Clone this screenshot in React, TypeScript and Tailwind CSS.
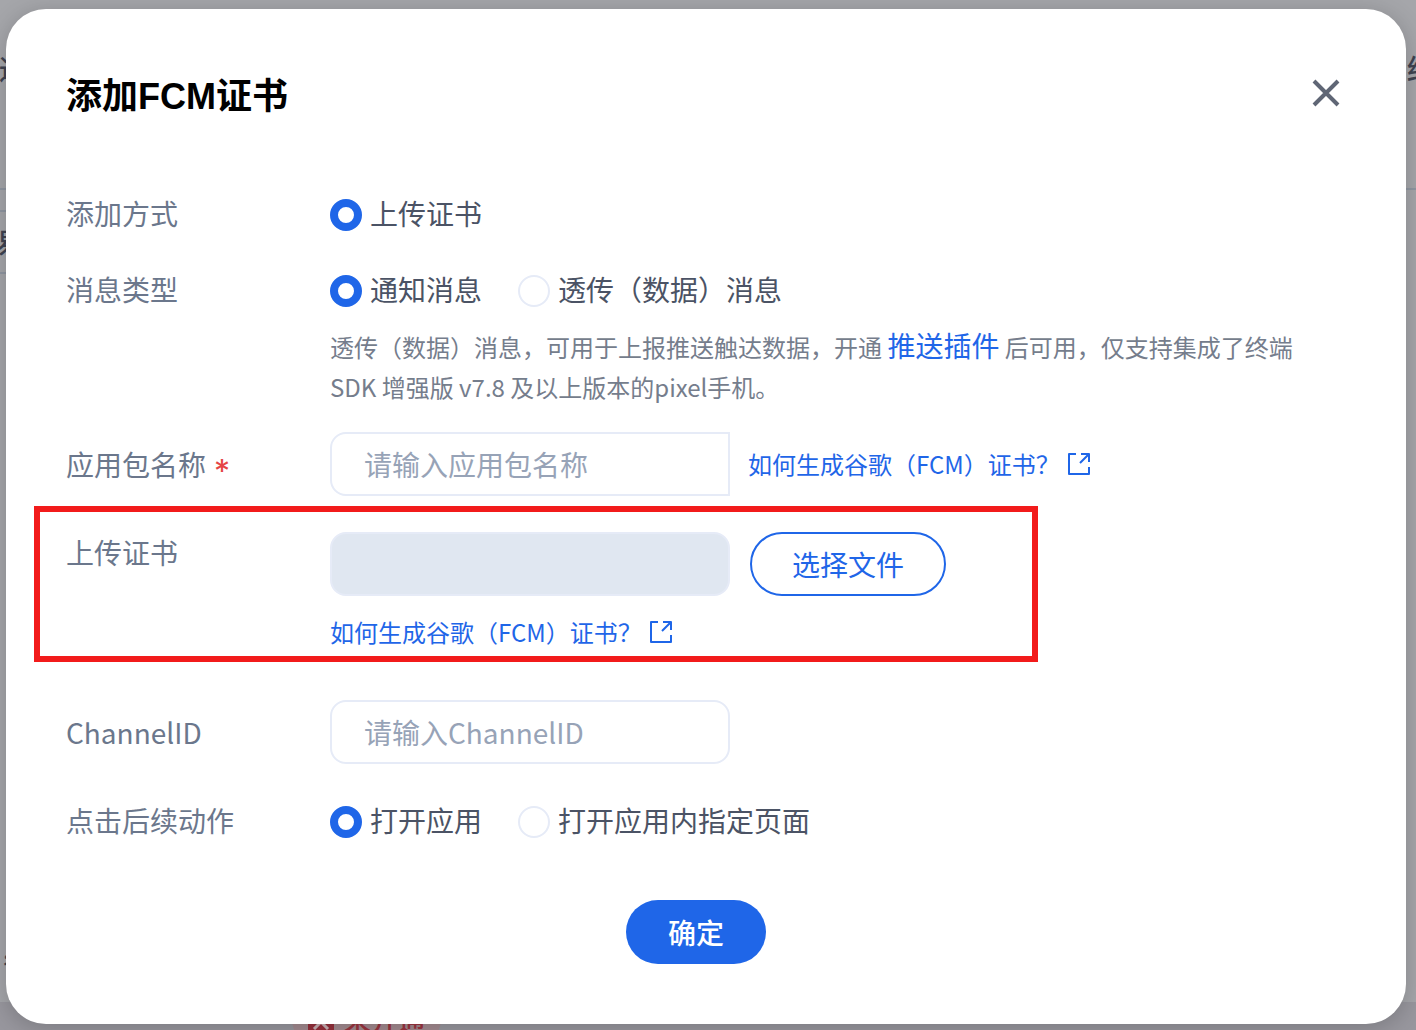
import { useState } from "react";
import type { ReactNode } from "react";

interface Option {
  value: string;
  label: string;
}

const METHODS: Option[] = [{ value: "upload", label: "上传证书" }];

const MESSAGE_TYPES: Option[] = [
  { value: "notice", label: "通知消息" },
  { value: "data", label: "透传（数据）消息" },
];

const ACTIONS: Option[] = [
  { value: "app", label: "打开应用" },
  { value: "page", label: "打开应用内指定页面" },
];

const LABEL = "w-[264px] shrink-0 text-[28px] text-[#6b778c]";
const INPUT =
  "h-16 w-[400px] border-2 border-[#e6ebf7] bg-white px-8 text-[28px] text-[#4b5365] outline-none placeholder:text-[#97a3b7]";

function RadioRow({ label, name, options }: { label: string; name: string; options: Option[] }) {
  const [value, setValue] = useState(options[0].value);

  return (
    <div className="flex items-start" role="radiogroup" aria-labelledby={name}>
      <span id={name} className={`${LABEL} leading-9`}>
        {label}
      </span>
      <div className="flex flex-wrap gap-9">
        {options.map((o) => (
          <label
            key={o.value}
            className="flex items-start gap-2 text-[28px] leading-9 text-[#4b5365]"
          >
            <input
              type="radio"
              name={name}
              checked={value === o.value}
              onChange={() => setValue(o.value)}
              className="mt-1 size-8 shrink-0 appearance-none rounded-full border-2 border-[#e6ebf7] bg-white checked:border-8 checked:border-[#1f66e8]"
            />
            {o.label}
          </label>
        ))}
      </div>
    </div>
  );
}

function HelpLink({ children }: { children: ReactNode }) {
  return (
    <a href="#help" className="flex items-center gap-2 text-2xl leading-10 text-[#1f66e8]">
      {children}
      <svg
        width="22"
        height="22"
        viewBox="0 0 22 22"
        fill="none"
        stroke="currentColor"
        strokeWidth="2"
        strokeLinejoin="round"
      >
        <path d="M8 1H1v20h20v-7M13 1h8v8M21 1L12 10" />
      </svg>
    </a>
  );
}

export default function App() {
  return (
    <div className="relative min-h-screen overflow-hidden bg-[#a5a6aa] font-['Noto_Sans_CJK_SC',sans-serif]">
      {/* dimmed page under the dialog */}
      <div
        aria-hidden="true"
        className="absolute inset-0 text-[28px] font-medium leading-10 text-[#3f4351]"
      >
        <div className="absolute inset-x-0 top-[188px] h-0.5 bg-[#9097a2]" />
        <div className="absolute left-0 top-[210px] h-0.5 w-10 bg-[#9097a2]" />
        <div className="absolute left-0 top-[272px] h-0.5 w-10 bg-[#9097a2]" />
        <div className="absolute inset-x-0 bottom-0 h-7 bg-[#98979e]" />
        <span className="absolute -left-px top-12">通</span>
        <span className="absolute -left-1 top-[222px]">易</span>
        <span className="absolute left-0 top-[930px]">，</span>
        <span className="absolute left-[1407px] top-12 whitespace-nowrap">终端</span>
        <div className="absolute left-[292px] top-[998px] flex h-11 w-[149px] items-center gap-2.5 rounded-3xl bg-[#a38b90] pl-4 text-[27px] text-[#9c3540]">
          <svg width="26" height="26" viewBox="0 0 26 26" className="shrink-0">
            <path d="M0 0h26v26H0z" fill="#96303c" />
            <path d="M6 8l14 14M20 8L6 22" stroke="#c8b0b4" strokeWidth="3" />
          </svg>
          未开通
        </div>
      </div>

      <div
        role="dialog"
        aria-labelledby="title"
        className="relative mb-1.5 ml-1.5 mr-2.5 mt-[9px] rounded-[40px] bg-white pb-[60px] pl-[60px] pr-[66px] pt-[60px] shadow-[0_4px_24px_rgba(0,0,0,0.2)]"
      >
        <header className="flex h-12 items-start justify-between">
          <h1 id="title" className="text-4xl font-bold leading-[48px] text-black">
            添加<span className="font-['Liberation_Sans',sans-serif]">FCM</span>证书
          </h1>
          <button type="button" aria-label="关闭" className="pt-[10px] text-[#5f6675]">
            <svg width="28" height="28" viewBox="0 0 28 28" stroke="currentColor" strokeWidth="4">
              <path d="M2 2l24 24M26 2L2 26" />
            </svg>
          </button>
        </header>

        <form className="mt-[78px] flex flex-col" onSubmit={(e) => e.preventDefault()}>
          <div className="flex flex-col gap-10">
            <RadioRow label="添加方式" name="method" options={METHODS} />
            <RadioRow label="消息类型" name="message" options={MESSAGE_TYPES} />
          </div>
          <p className="ml-[264px] mt-5 text-2xl leading-10 text-[#757d8c]">
            透传（数据）消息，可用于上报推送触达数据，开通{" "}
            <a href="#plugin" className="text-[28px] leading-none text-[#1f66e8]">
              推送插件
            </a>{" "}
            后可用，仅支持集成了终端 SDK 增强版 v7.8 及以上版本的pixel手机。
          </p>

          <div className="mt-[25px] flex items-center">
            <label htmlFor="package" className={`${LABEL} flex items-center gap-2 leading-10`}>
              应用包名称
              <span className="h-10 pt-2 font-[Inter] text-[32px] leading-10 text-[#e54545]">*</span>
            </label>
            <input
              id="package"
              placeholder="请输入应用包名称"
              className={`${INPUT} mr-[18px] rounded-l-2xl`}
            />
            <HelpLink>如何生成谷歌（FCM）证书？</HelpLink>
          </div>

          <div className="relative mt-9 flex items-start">
            <label htmlFor="certificate" className={`${LABEL} leading-10`}>
              上传证书
            </label>
            <div>
              <div className="flex gap-5">
                <input
                  id="certificate"
                  disabled
                  className={`${INPUT} rounded-2xl disabled:bg-[#e0e7f1]`}
                />
                <button
                  type="button"
                  className="h-16 rounded-full border-2 border-[#1f66e8] px-10 text-[28px] text-[#1f66e8]"
                >
                  选择文件
                </button>
              </div>
              <div className="mt-4 flex">
                <HelpLink>如何生成谷歌（FCM）证书？</HelpLink>
              </div>
            </div>
            {/* highlight frame */}
            <div className="pointer-events-none absolute -left-8 -top-[26px] h-[156px] w-[1004px] border-6 border-[#f21b1b]" />
          </div>

          <div className="mb-[38px] mt-12 flex items-center">
            <label htmlFor="channel" className={`${LABEL} leading-10`}>
              ChannelID
            </label>
            <input id="channel" placeholder="请输入ChannelID" className={`${INPUT} rounded-2xl`} />
          </div>

          <RadioRow label="点击后续动作" name="action" options={ACTIONS} />

          <button
            type="submit"
            className="mr-3.5 mt-[62px] h-16 w-[140px] self-center rounded-full bg-[#1f66e8] text-[28px] font-medium text-white"
          >
            确定
          </button>
        </form>
      </div>
    </div>
  );
}
